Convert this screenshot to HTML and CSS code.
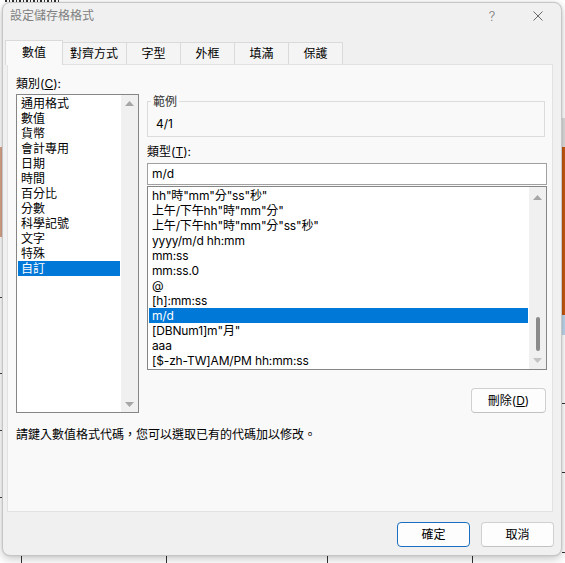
FILE: index.html
```html
<!DOCTYPE html>
<html lang="zh-Hant">
<head>
<meta charset="utf-8">
<title>設定儲存格格式</title>
<link rel="stylesheet" href="styles.css">
</head>
<body>
<div class="backdrop-bits"></div>
<div class="dialog">
  <div class="titlebar">
    <span class="title">設定儲存格格式</span>
    <span class="help">?</span>
    <span class="close"><svg width="10" height="10" viewBox="0 0 10 10"><path d="M0.5 0.5 L9.5 9.5 M9.5 0.5 L0.5 9.5" stroke="#6a6a6a" stroke-width="1" fill="none"/></svg></span>
  </div>
  <div class="tabs">
    <div class="tab active">數值</div>
    <div class="tab wide">對齊方式</div>
    <div class="tab">字型</div>
    <div class="tab">外框</div>
    <div class="tab">填滿</div>
    <div class="tab">保護</div>
  </div>
  <div class="panel">
    <div class="cols">
      <div class="leftcol">
        <div class="label">類別(<u>C</u>):</div>
        <div class="listbox cat">
          <ul class="items">
            <li class="item">通用格式</li>
            <li class="item">數值</li>
            <li class="item">貨幣</li>
            <li class="item">會計專用</li>
            <li class="item">日期</li>
            <li class="item">時間</li>
            <li class="item">百分比</li>
            <li class="item">分數</li>
            <li class="item">科學記號</li>
            <li class="item">文字</li>
            <li class="item">特殊</li>
            <li class="item sel">自訂</li>
          </ul>
          <div class="vscroll cat-scroll">
            <div class="arrow-box up"><svg width="9" height="5" viewBox="0 0 9 5"><path d="M0 5 L4.5 0 L9 5 Z" fill="#a6a6a6"/></svg></div>
            <div class="track"></div>
            <div class="arrow-box down"><svg width="9" height="5" viewBox="0 0 9 5"><path d="M0 0 L4.5 5 L9 0 Z" fill="#a6a6a6"/></svg></div>
          </div>
        </div>
      </div>
      <div class="rightcol">
        <fieldset class="sample">
          <legend>範例</legend>
          <div class="sample-val">4/1</div>
        </fieldset>
        <div class="label type">類型(<u>T</u>):</div>
        <div class="input">m/d</div>
        <div class="listbox fmt">
          <ul class="items">
            <li class="item">hh"時"mm"分"ss"秒"</li>
            <li class="item">上午/下午hh"時"mm"分"</li>
            <li class="item">上午/下午hh"時"mm"分"ss"秒"</li>
            <li class="item">yyyy/m/d hh:mm</li>
            <li class="item">mm:ss</li>
            <li class="item">mm:ss.0</li>
            <li class="item">@</li>
            <li class="item">[h]:mm:ss</li>
            <li class="item sel">m/d</li>
            <li class="item">[DBNum1]m"月"</li>
            <li class="item">aaa</li>
            <li class="item">[$-zh-TW]AM/PM hh:mm:ss</li>
          </ul>
          <div class="vscroll fmt-scroll">
            <div class="arrow-box up"><svg width="9" height="5" viewBox="0 0 9 5"><path d="M0 5 L4.5 0 L9 5 Z" fill="#a6a6a6"/></svg></div>
            <div class="track"><div class="thumb"></div></div>
            <div class="arrow-box down"><svg width="9" height="5" viewBox="0 0 9 5"><path d="M0 0 L4.5 5 L9 0 Z" fill="#c4c4c4"/></svg></div>
          </div>
        </div>
        <div class="btnrow">
          <button class="btn del">刪除(<u>D</u>)</button>
        </div>
      </div>
    </div>
    <div class="hint">請鍵入數值格式代碼，您可以選取已有的代碼加以修改。</div>
  </div>
  <div class="footer">
    <button class="btn primary">確定</button>
    <button class="btn">取消</button>
  </div>
</div>
</body>
</html>
```

FILE: styles.css
```css
* { box-sizing: border-box; }
html, body { margin: 0; padding: 0; }
body {
  width: 565px;
  height: 563px;
  overflow: hidden;
  position: relative;
  font-family: "Inter", "Noto Sans CJK TC", sans-serif;
  font-size: 12px;
  color: #000;
  background:
    linear-gradient(#dcdcdc, #dcdcdc) 562px 118px / 3px 29px no-repeat,
    linear-gradient(#c65911, #c65911) 562px 147px / 3px 168px no-repeat,
    linear-gradient(#bdd7ee, #bdd7ee) 562px 315px / 3px 20px no-repeat,
    linear-gradient(#333, #333) 562px 403px / 3px 1px no-repeat,
    linear-gradient(#333, #333) 562px 472px / 3px 1px no-repeat,
    linear-gradient(#333, #333) 562px 552px / 3px 1px no-repeat,
    linear-gradient(#d9a58a, #d9a58a) 0 147px / 2px 90px no-repeat,
    linear-gradient(#444, #444) 0 297px / 2px 1px no-repeat,
    linear-gradient(#444, #444) 0 373px / 2px 1px no-repeat,
    linear-gradient(#444, #444) 0 430px / 2px 1px no-repeat,
    linear-gradient(#444, #444) 0 497px / 2px 1px no-repeat,
    linear-gradient(#333, #333) 21px 556px / 1px 7px no-repeat,
    linear-gradient(#333, #333) 166px 556px / 1px 7px no-repeat,
    linear-gradient(#333, #333) 327px 556px / 1px 7px no-repeat,
    linear-gradient(#333, #333) 472px 556px / 1px 7px no-repeat,
    #ffffff;
}

/* fragments of sheet text peeking above the dialog */
.backdrop-bits {
  position: absolute;
  left: 5px;
  top: 0;
  width: 56px;
  height: 2px;
  background: repeating-linear-gradient(90deg, #333 0 2px, transparent 2px 4px, #333 4px 5px, transparent 5px 7px);
}

.dialog {
  position: absolute;
  left: 2px;
  top: 2px;
  width: 560px;
  height: 554px;
  border: 1px solid #c6c6c6;
  border-radius: 8px;
  background: #f0f0f0;
  box-shadow: 0 3px 10px rgba(0, 0, 0, 0.22), 0 0 2px rgba(0, 0, 0, 0.12);
  display: flex;
  flex-direction: column;
}

/* title bar */
.titlebar {
  height: 26px;
  display: flex;
  align-items: center;
  padding-left: 7px;
}
.title {
  flex: 1;
  color: #808080;
  line-height: 16px;
}
.help {
  width: 16px;
  text-align: center;
  color: #7a7a7a;
  font-size: 13px;
  font-weight: 300;
  line-height: 16px;
  margin-right: 15px;
}
.close {
  width: 46px;
  height: 16px;
  display: flex;
  justify-content: center;
  align-items: center;
}

/* tabs */
.tabs {
  display: flex;
  align-items: flex-start;
  height: 25px;
  margin-top: 11px;
  margin-bottom: -1px;
  padding-left: 4px;
  position: relative;
  z-index: 1;
}
.tab {
  height: 22px;
  margin-top: 2px;
  margin-left: -1px;
  padding: 0 14.5px;
  border: 1px solid #dadada;
  border-bottom: none;
  background: #f4f4f4;
  display: flex;
  align-items: center;
  line-height: 15px;
  white-space: nowrap;
}
.tab.wide { padding: 0 8px; }
.tab.active {
  height: 25px;
  margin-top: 0;
  margin-left: -2px;
  margin-right: -1px;
  padding: 0 16px 1px;
  background: #f9f9f9;
  position: relative;
  z-index: 2;
}

/* panel */
.panel {
  margin: 0 8px 0 4px;
  height: 448px;
  border: 1px solid #e2e2e2;
  background: #f9f9f9;
  padding: 11px 5px 0 8px;
}
.cols { display: flex; }
.leftcol { width: 123px; }
.rightcol {
  width: 400px;
  margin-left: 8px;
  padding-top: 18px;
}
.label {
  line-height: 15px;
  height: 15px;
  white-space: nowrap;
}
.label u { text-underline-offset: 1px; }

.listbox {
  background: #fff;
  border: 1px solid #868686;
  display: flex;
  overflow: hidden;
}
.items {
  list-style: none;
  margin: 0;
  padding: 1px 0 0 1px;
  flex: 1;
  min-width: 0;
}
.item {
  height: 15px;
  line-height: 15px;
  padding-left: 3px;
  margin-right: 1px;
  white-space: nowrap;
  overflow: hidden;
}
.fmt .item { letter-spacing: -0.15px; }
.item.sel {
  background: #0078d7;
  color: #fff;
}
.cat {
  margin-top: 3px;
  height: 319px;
}
.vscroll {
  width: 17px;
  flex: none;
  background: #f0f0f0;
  display: flex;
  flex-direction: column;
  align-items: center;
}
.arrow-box {
  width: 17px;
  display: flex;
  justify-content: center;
  align-items: center;
  flex: none;
}
.cat-scroll .arrow-box { height: 16px; }
.fmt-scroll .arrow-box.up { height: 20px; }
.fmt-scroll .arrow-box.down { height: 18px; }
.track {
  flex: 1;
  width: 17px;
  display: flex;
  flex-direction: column;
  justify-content: flex-end;
  align-items: center;
}
.thumb {
  width: 4px;
  height: 34px;
  border-radius: 2px;
  background: #8a8a8a;
}

/* sample */
.sample {
  margin: 0 2px 0 0;
  padding: 0;
  border: 1px solid #dcdcdc;
  min-width: 0;
}
.sample legend {
  padding: 0 2px;
  margin-left: 3px;
  line-height: 15px;
  color: #333;
}
.sample-val {
  padding: 7px 8px 5px;
  line-height: 15px;
}
.label.type { margin-top: 7px; }
.input {
  margin-top: 4px;
  height: 22px;
  border: 1px solid #a0a0a0;
  background: #fff;
  padding-left: 4px;
  line-height: 20px;
}
.fmt {
  margin-top: 1px;
  height: 184px;
}

/* buttons */
.btnrow {
  display: flex;
  justify-content: flex-end;
  margin-top: 18px;
  padding-right: 1px;
}
.btn {
  width: 73px;
  height: 25px;
  padding: 0;
  border: 1px solid #d0d0d0;
  border-bottom-color: #c2c2c2;
  border-radius: 4px;
  background: #fdfdfd;
  font-family: inherit;
  font-size: 12px;
  line-height: 15px;
  color: #000;
}
.btn.del { width: 75px; }
.btn.primary { border-color: #1a6fc0; }

.hint {
  margin-top: 14px;
  line-height: 16px;
  white-space: nowrap;
}

.footer {
  display: flex;
  justify-content: flex-end;
  gap: 11px;
  padding-right: 7px;
  margin-top: 10px;
}
```
